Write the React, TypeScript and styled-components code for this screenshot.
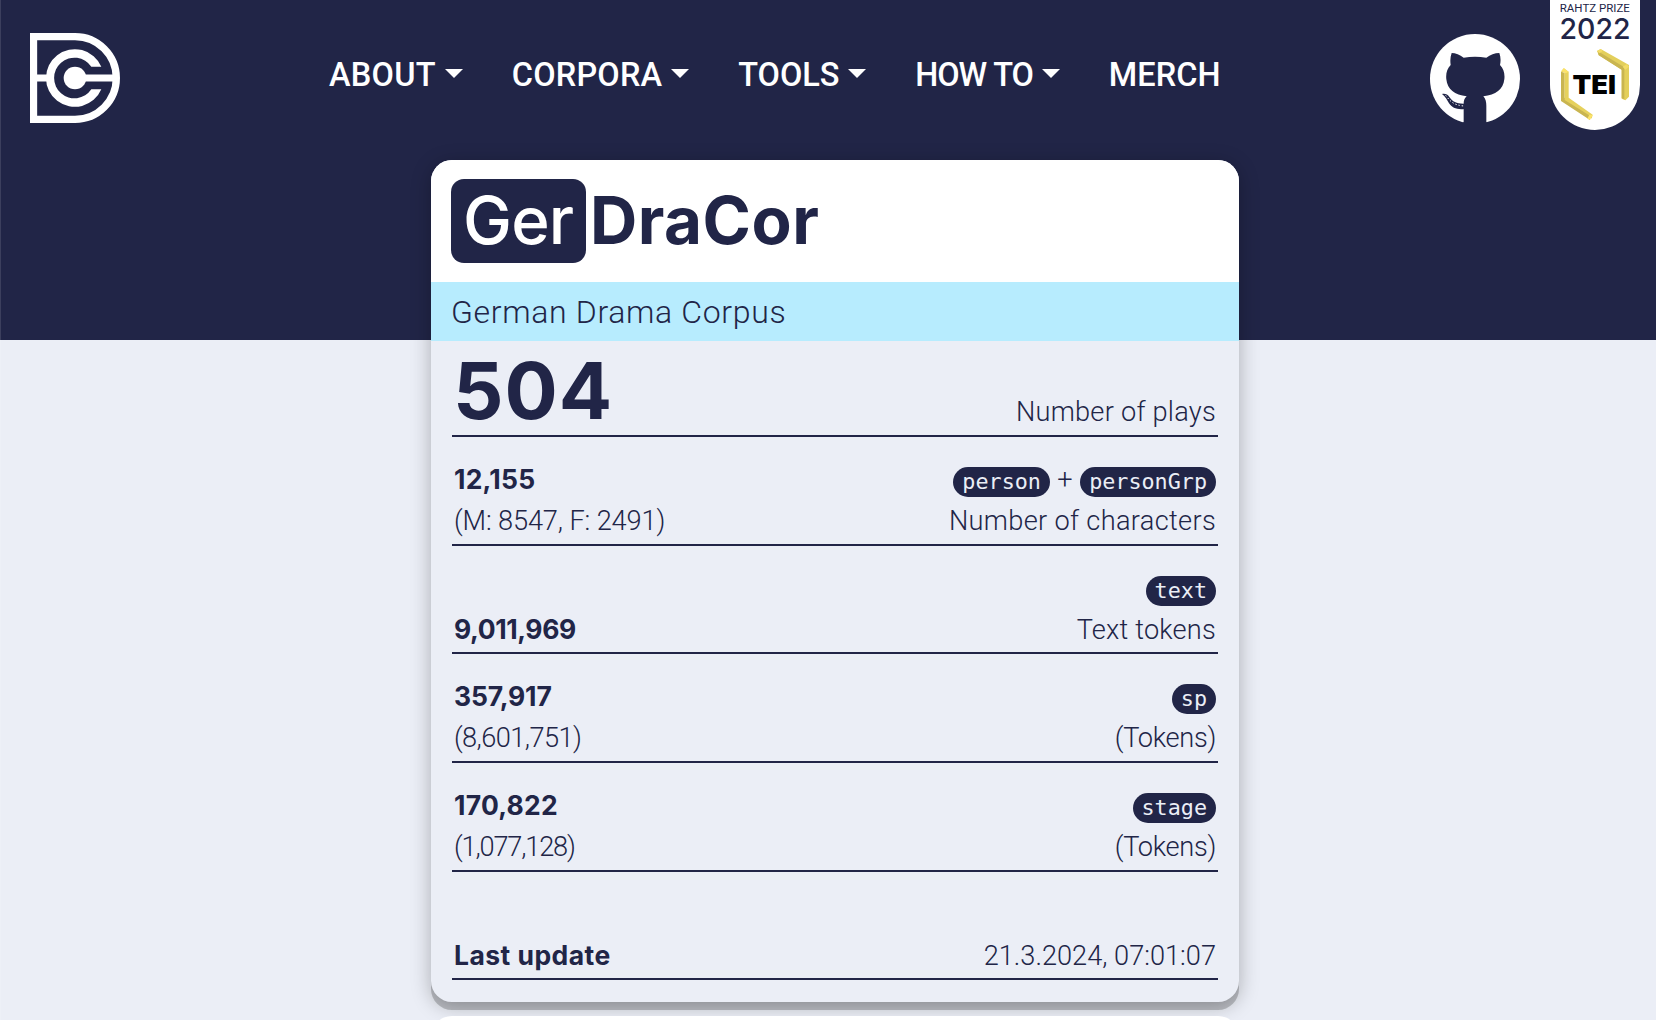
import React from "react";
import styled, { createGlobalStyle } from "styled-components";

const navy = "#212547";
const paper = "#ebeef6";

const GlobalStyle = createGlobalStyle`
  * { box-sizing: border-box; }
  body { margin: 0; background: ${paper}; color: ${navy}; font-family: Roboto, "Liberation Sans", sans-serif; }
`;

const Page = styled.div`
  height: 1020px;
  overflow: hidden;
  background: linear-gradient(${navy} 340px, ${paper} 340px);
  box-shadow: inset 1px 0 0 rgba(255, 255, 255, 0.12);
`;

const Header = styled.header`
  height: 160px;
  display: flex;
  align-items: flex-start;
  padding: 0 16px 0 30px;
`;

const LogoLink = styled.a`
  display: block;
  width: 90px;
  height: 90px;
  margin-top: 33px;
`;

const Nav = styled.nav`
  display: flex;
  gap: 49px;
  margin: 54px auto 0 209px;
`;

const NavItem = styled.a<{ $spacing: number; $word?: number }>`
  display: flex;
  align-items: center;
  color: #fff;
  font-size: 32.5px;
  font-weight: 500;
  line-height: 42px;
  white-space: nowrap;
  letter-spacing: ${(p) => p.$spacing}px;
  word-spacing: ${(p) => p.$word ?? 0}px;
`;

const Caret = styled.span`
  margin-left: 9px;
  margin-bottom: 3px;
  border: 9px solid transparent;
  border-top-color: #fff;
  border-bottom: 0;
`;

const GithubLink = styled.a`
  display: block;
  width: 90px;
  height: 90px;
  margin: 34px 30px 0 0;
`;

const Badge = styled.a`
  display: block;
  width: 90px;
  height: 130px;
  background: #fff;
  border-radius: 0 0 45px 45px;
`;

const Card = styled.main`
  width: 808px;
  height: 842px;
  margin-left: 431px;
  border-radius: 21px;
  background: ${paper};
  box-shadow: 0 8px 0 rgba(0, 0, 0, 0.2), 0 4px 20px rgba(0, 0, 0, 0.28);
`;

const CardHead = styled.div`
  height: 122px;
  padding: 19px 20px;
  display: flex;
  border-radius: 21px 21px 0 0;
  background: #fff;
`;

const Title = styled.h1`
  margin: 0;
  display: flex;
  font: 700 65.5px/84px Inter, sans-serif;
  letter-spacing: 0.5px;
`;

const Prefix = styled.span`
  width: 135px;
  height: 84px;
  padding-left: 12px;
  margin-right: 4px;
  border-radius: 13px;
  background: ${navy};
  color: #fff;
  font-weight: 500;
  letter-spacing: -0.8px;
`;

const Subtitle = styled.div`
  height: 59px;
  padding-left: 20px;
  background: #b7ecfe;
  font-size: 32px;
  font-weight: 300;
  line-height: 60px;
  letter-spacing: 0.66px;
`;

const Stats = styled.div`
  padding: 0 21px;
`;

const StatRow = styled.div<{ $first?: boolean }>`
  height: ${(p) => (p.$first ? 96 : 108.7)}px;
  display: flex;
  justify-content: space-between;
  align-items: flex-end;
  padding: 0 2px 3px;
  border-bottom: 2px solid ${navy};
`;

const Cell = styled.div<{ $right?: boolean }>`
  display: flex;
  flex-direction: column;
  align-items: ${(p) => (p.$right ? "flex-end" : "flex-start")};
`;

const Line = styled.span<{ $ls?: number }>`
  display: block;
  height: 40.8px;
  padding-top: 1px;
  font-size: 27.2px;
  font-weight: 300;
  line-height: 40.8px;
  white-space: nowrap;
  letter-spacing: ${(p) => p.$ls ?? 0}px;
`;

const Strong = styled(Line)`
  padding-top: 0;
  font-family: Inter, sans-serif;
  font-size: 26.5px;
  font-weight: 700;
`;

const TagLine = styled(Line)`
  word-spacing: 0.8px;
`;

const Big = styled.span`
  font: 700 79px/80px Inter, sans-serif;
  letter-spacing: 1px;
  margin: 0 0 2px -1px;
`;

const Tag = styled.code`
  display: inline-block;
  height: 30px;
  padding: 0 9px;
  border-radius: 15px;
  background: ${navy};
  color: ${paper};
  font: 400 21.76px/29px "DejaVu Sans Mono", monospace;
  letter-spacing: 0;
`;

const NextCard = styled.section`
  position: relative;
  width: 808px;
  height: 60px;
  margin: 14px 0 0 431px;
  border-radius: 21px;
  background: #fff;
`;

const Logo = () => (
  <svg width="90" height="90" viewBox="0 0 270 270" fill="none" stroke="#fff">
    <path d="M10.500 11H135A124 124 0 0 1 135 259H10.500Z" strokeWidth="22" />
    <path d="M10 135H60M135 135H255" strokeWidth="21" />
    <path
      d="M214 101A86.500 86.500 0 1 0 214 169H184A61 61 0 1 1 184 101Z"
      fill="#fff"
      stroke="none"
    />
    <circle cx="135" cy="135" r="34" fill="#fff" stroke="none" />
  </svg>
);

const Github = () => (
  <svg width="90" height="90" viewBox="0 42 270 270">
    <circle cx="135" cy="177" r="135" fill="#fff" />
    <g fill={navy}>
      <path d="M65 99C76 99 90 105 101 113Q135 107 169 113C181 105 194 99 208 99C212 111 213 122 210 135C221 146 225 160 223 178C220 208 197 225 160 229C167 237 169 246 169 257V306L176 314H94L101 306V250C101 241 104 234 110 229C74 225 52 208 49 178C47 160 51 147 62 135C60 122 61 110 65 99Z" />
      <path d="M36 222C45 220 53 223 58 231C68 246 82 252 104 251V267C82 270 66 264 57 250C51 239 46 229 36 222Z" />
    </g>
    <path d="M47 226C58 240 68 256 103 258" fill="none" stroke="#fff" strokeWidth="3" strokeDasharray="4 6" />
  </svg>
);

const PrizeBadge = () => (
  <svg width="90" height="130" viewBox="0 0 90 130">
    <g fontFamily="Roboto, sans-serif" fill={navy}>
      <text x="9.800" y="12" fontSize="11.300" textLength="70" lengthAdjust="spacingAndGlyphs">RAHTZ PRIZE</text>
      <text x="9.500" y="39" fontSize="29" fontFamily="Inter, sans-serif" fontWeight="500" textLength="71" lengthAdjust="spacingAndGlyphs">2022</text>
    </g>
    <text x="22.500" y="93.500" fontSize="26" fontFamily="Inter, sans-serif" fontWeight="900" fill="#000" textLength="43.500" lengthAdjust="spacingAndGlyphs">TEI</text>
    <g transform="scale(.33333)">
      <path d="M33 215L44 218V293L56 302L120 344V360L33 303Z" fill="#c9b550" />
      <path d="M41 205L56 215V293L128 344L125 356L115 344L44 300V216L33 216Z" fill="#e6d15c" />
      <path d="M34 212L42 204L56 216L46 220ZM118 344L128 345L120 360L112 356Z" fill="#fbe26a" />
      <path d="M141 153L152 147L237 195V290L226 301L215 296V209L146 165Z" fill="#e3cf5b" />
      <path d="M143 153L223 202V298L215 294V209L146 166Z" fill="#c9b550" />
      <path d="M141 153L152 147L158 153L148 160ZM218 200L230 193L237 200L226 209Z" fill="#f3dc66" />
    </g>
  </svg>
);

const menu: { label: string; ls: number; word?: number; caret?: boolean }[] = [
  { label: "ABOUT", ls: 0.24, caret: true },
  { label: "CORPORA", ls: 0.2, caret: true },
  { label: "TOOLS", ls: -0.1, caret: true },
  { label: "HOW TO", ls: -1.1, word: 1, caret: true },
  { label: "MERCH", ls: 0.1 },
];

export default function App() {
  return (
    <>
      <GlobalStyle />
      <Page>
        <Header>
          <LogoLink><Logo /></LogoLink>
          <Nav>
            {menu.map((m) => (
              <NavItem key={m.label} $spacing={m.ls} $word={m.word}>
                {m.label}
                {m.caret && <Caret />}
              </NavItem>
            ))}
          </Nav>
          <GithubLink><Github /></GithubLink>
          <Badge><PrizeBadge /></Badge>
        </Header>
        <Card>
          <CardHead>
            <Title><Prefix>Ger</Prefix>DraCor</Title>
          </CardHead>
          <Subtitle>German Drama Corpus</Subtitle>
          <Stats>
            <StatRow $first>
              <Big>504</Big>
              <Cell $right><Line $ls={0.24}>Number of plays</Line></Cell>
            </StatRow>
            <StatRow>
              <Cell>
                <Strong $ls={0.25}>12,155</Strong>
                <Line $ls={-0.13}>(M: 8547, F: 2491)</Line>
              </Cell>
              <Cell $right>
                <TagLine><Tag>person</Tag> + <Tag>personGrp</Tag></TagLine>
                <Line $ls={0.32}>Number of characters</Line>
              </Cell>
            </StatRow>
            <StatRow>
              <Cell><Strong $ls={-0.4}>9,011,969</Strong></Cell>
              <Cell $right>
                <TagLine><Tag>text</Tag></TagLine>
                <Line $ls={0.2}>Text tokens</Line>
              </Cell>
            </StatRow>
            <StatRow>
              <Cell>
                <Strong $ls={-0.15}>357,917</Strong>
                <Line $ls={-0.57}>(8,601,751)</Line>
              </Cell>
              <Cell $right>
                <TagLine><Tag>sp</Tag></TagLine>
                <Line $ls={-0.3}>(Tokens)</Line>
              </Cell>
            </StatRow>
            <StatRow>
              <Cell>
                <Strong $ls={0.25}>170,822</Strong>
                <Line $ls={-1.17}>(1,077,128)</Line>
              </Cell>
              <Cell $right>
                <TagLine><Tag>stage</Tag></TagLine>
                <Line $ls={-0.3}>(Tokens)</Line>
              </Cell>
            </StatRow>
            <StatRow>
              <Cell><Strong $ls={0.45}>Last update</Strong></Cell>
              <Cell $right><Line>21.3.2024, 07:01:07</Line></Cell>
            </StatRow>
          </Stats>
        </Card>
        <NextCard />
      </Page>
    </>
  );
}
